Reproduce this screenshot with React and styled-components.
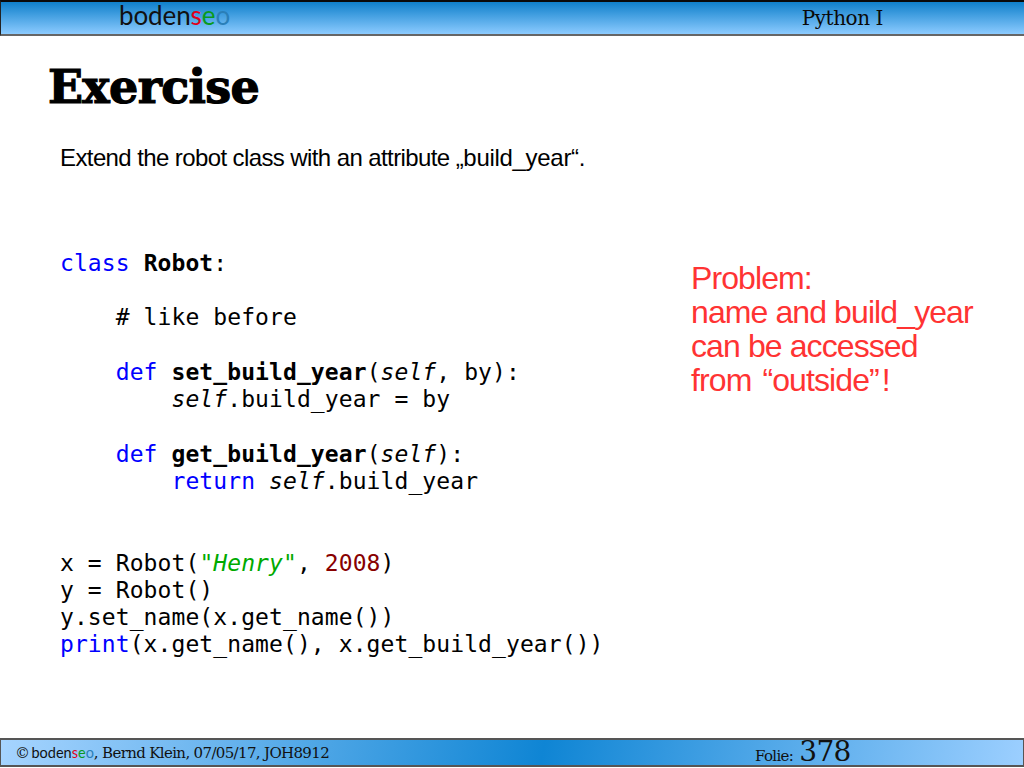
import styled, { createGlobalStyle } from 'styled-components';

const GlobalStyle = createGlobalStyle`
  html, body {
    margin: 0;
    padding: 0;
    background: #fff;
  }
`;

const Slide = styled.div`
  width: 1024px;
  height: 768px;
  display: flex;
  flex-direction: column;
  overflow: hidden;
  font-family: "Liberation Sans", Arial, sans-serif;
`;

const TopBar = styled.header`
  height: 32px;
  flex: none;
  display: flex;
  align-items: center;
  justify-content: space-between;
  padding: 0 141px 0 118px;
  border-top: 2px solid #0a0a0a;
  border-left: 1px solid #222;
  border-bottom: 2px solid #666;
  background: linear-gradient(to bottom, #0f80cb, #8ccbff);
`;

const Logo = styled.span`
  font-family: "Lato", sans-serif;
  font-size: ${(p) => p.$size}px;
  font-weight: 400;
  letter-spacing: ${(p) => p.$spacing}px;
  margin-bottom: ${(p) => p.$lift || 0}px;
  margin-left: ${(p) => p.$nudge || 0}px;
  color: #111;
`;

const Letter = styled.span`
  color: ${(p) => p.$color};
`;

const Course = styled.span`
  font-family: "DejaVu Serif", serif;
  font-size: 20px;
  letter-spacing: -0.45px;
  color: #0a0a0a;
`;

const Content = styled.main`
  flex: 1;
  display: flex;
  flex-direction: column;
  padding: 25px 0 0 49px;
`;

const Title = styled.h1`
  margin: 0 0 0 -1px;
  font-family: "DejaVu Serif", serif;
  font-size: 46px;
  line-height: 52px;
  font-weight: 900;
  letter-spacing: -0.7px;
  color: #000;
  -webkit-text-stroke: 1.2px #000;
`;

const Lead = styled.p`
  margin: 31px 0 0 11px;
  font-size: 24px;
  line-height: 28px;
  letter-spacing: -0.6px;
  font-kerning: none;
  color: #000;
`;

const LeadAttr = styled.span`
  letter-spacing: -0.3px;
`;

const Columns = styled.div`
  display: flex;
  margin: 78px 0 0 11px;
`;

const Code = styled.pre`
  margin: 0;
  width: 631px;
  font-family: "DejaVu Sans Mono", monospace;
  font-size: 23px;
  letter-spacing: 0.09px;
  line-height: 27.23px;
  color: #000;
`;

const Keyword = styled.span`
  color: #0000ff;
`;

const Name = styled.b`
  font-weight: 700;
`;

const Self = styled.i`
  font-style: italic;
`;

const Str = styled.i`
  font-style: italic;
  color: #00aa00;
`;

const Num = styled.span`
  color: #880000;
`;

const Note = styled.p`
  margin: 0;
  padding-top: 11px;
  font-size: 32px;
  line-height: 34px;
  letter-spacing: -0.9px;
  font-kerning: none;
  color: #ff3333;
`;

const Quoted = styled.span`
  margin: 0 3px;
`;

const BottomBar = styled.footer`
  height: 25px;
  flex: none;
  margin-bottom: 1px;
  display: flex;
  align-items: center;
  padding-left: 14px;
  border: solid #555;
  border-width: 2px 1px 2px 1px;
  background: linear-gradient(100deg, #a6d4ff 0%, #0f85d4 53%, #9ccfff 100%);
  font-family: "DejaVu Serif", serif;
  font-size: 15px;
  letter-spacing: -0.65px;
  color: #111;
`;

const Credit = styled.span`
  width: 740px;
`;

const PageLabel = styled.span`
  display: flex;
  align-items: baseline;
  gap: 6px;
`;

const PageNumber = styled.span`
  font-size: 28px;
  line-height: 22px;
`;

function Bodenseo({ size, spacing, lift, nudge }) {
  return (
    <Logo $size={size} $spacing={spacing} $lift={lift} $nudge={nudge}>
      boden<Letter $color="#e0001a">s</Letter>
      <Letter $color="#0a9a1e">e</Letter>
      <Letter $color="#2a7fb8">o</Letter>
    </Logo>
  );
}

export default function App() {
  return (
    <Slide>
      <GlobalStyle />
      <TopBar>
        <Bodenseo size={26} spacing={-0.1} lift={7} />
        <Course>Python I</Course>
      </TopBar>
      <Content>
        <Title>Exercise</Title>
        <Lead>Extend the robot class with an attribute <LeadAttr>„build_year“.</LeadAttr></Lead>
        <Columns>
          <Code>
            <Keyword>class</Keyword> <Name>Robot</Name>:{'\n\n'}
            {'    '}# like before{'\n\n'}
            {'    '}<Keyword>def</Keyword> <Name>set_build_year</Name>(<Self>self</Self>, by):{'\n'}
            {'        '}<Self>self</Self>.build_year = by{'\n\n'}
            {'    '}<Keyword>def</Keyword> <Name>get_build_year</Name>(<Self>self</Self>):{'\n'}
            {'        '}<Keyword>return</Keyword> <Self>self</Self>.build_year{'\n\n\n'}
            x = Robot(<Str>"Henry"</Str>, <Num>2008</Num>){'\n'}
            y = Robot(){'\n'}
            y.set_name(x.get_name()){'\n'}
            <Keyword>print</Keyword>(x.get_name(), x.get_build_year())
          </Code>
          <Note>
            Problem:<br />
            name and build_year<br />
            can be accessed<br />
            from <Quoted>“outside”</Quoted>!
          </Note>
        </Columns>
      </Content>
      <BottomBar>
        <Credit>
          © <Bodenseo size={14.5} spacing={0} nudge={-2} />, Bernd Klein, 07/05/17, JOH8912
        </Credit>
        <PageLabel>
          Folie: <PageNumber>378</PageNumber>
        </PageLabel>
      </BottomBar>
    </Slide>
  );
}
